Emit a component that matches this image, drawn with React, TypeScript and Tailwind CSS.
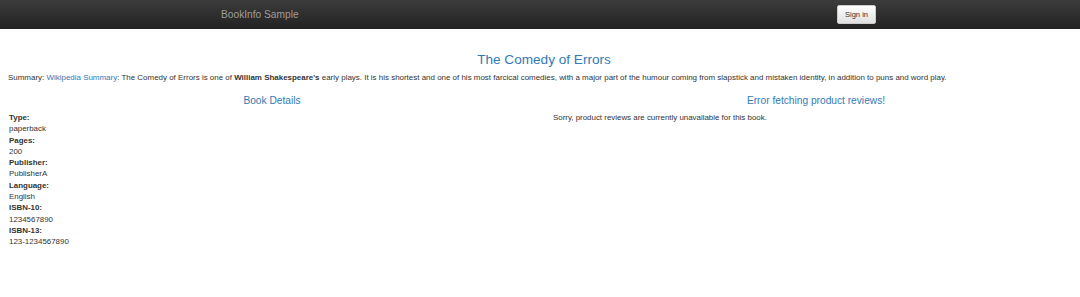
export default function App() {
  const details: [string, string][] = [
    ["Type:", "paperback"],
    ["Pages:", "200"],
    ["Publisher:", "PublisherA"],
    ["Language:", "English"],
    ["ISBN-10:", "1234567890"],
    ["ISBN-13:", "123-1234567890"],
  ];

  return (
    <div className="min-h-[297px] overflow-hidden bg-white text-[#333] text-[7.92px] leading-[11.3px] font-['Liberation_Sans',Arial,sans-serif]">
      {/* navbar */}
      <nav className="h-[29px] flex items-center bg-gradient-to-b from-[#3c3c3c] to-[#222] pl-[221px] pr-[204px]">
        <span className="text-[#9d9d9d] text-[10.2px]">BookInfo Sample</span>
        <button className="ml-auto h-[19px] w-[39px] rounded-[2px] border border-[#ccc] bg-gradient-to-b from-white to-[#e0e0e0] text-[#333] text-[7.5px] leading-none">
          Sign in
        </button>
      </nav>

      <div className="w-[1088px]">
        <div className="px-[8px]">
          <h3 className="mt-[23px] mb-[5px] text-center text-[#337ab7] text-[13.6px] leading-[15px]">
            The Comedy of Errors
          </h3>
          <p className="mb-[6px] text-[7.96px]">
            Summary: <a className="text-[#337ab7]">Wikipedia Summary</a>: The Comedy of Errors is one of{" "}
            <b>William Shakespeare's</b> early plays. It is his shortest and one of his most farcical comedies, with a
            major part of the humour coming from slapstick and mistaken identity, in addition to puns and word play.
          </p>
        </div>

        <div className="grid grid-cols-2">
          <div className="px-[9px]">
            <h4 className="mt-[6px] mb-[5.5px] text-center text-[#337ab7] text-[10.2px] leading-[11.2px]">Book Details</h4>
            <dl>
              {details.map(([k, v]) => (
                <div key={k}>
                  <dt className="font-bold">{k}</dt>
                  <dd>{v}</dd>
                </div>
              ))}
            </dl>
          </div>
          <div className="px-[9px]">
            <h4 className="mt-[6px] mb-[5.5px] text-center text-[#337ab7] text-[10.2px] leading-[11.2px]">
              Error fetching product reviews!
            </h4>
            <p>Sorry, product reviews are currently unavailable for this book.</p>
          </div>
        </div>
      </div>
    </div>
  );
}
